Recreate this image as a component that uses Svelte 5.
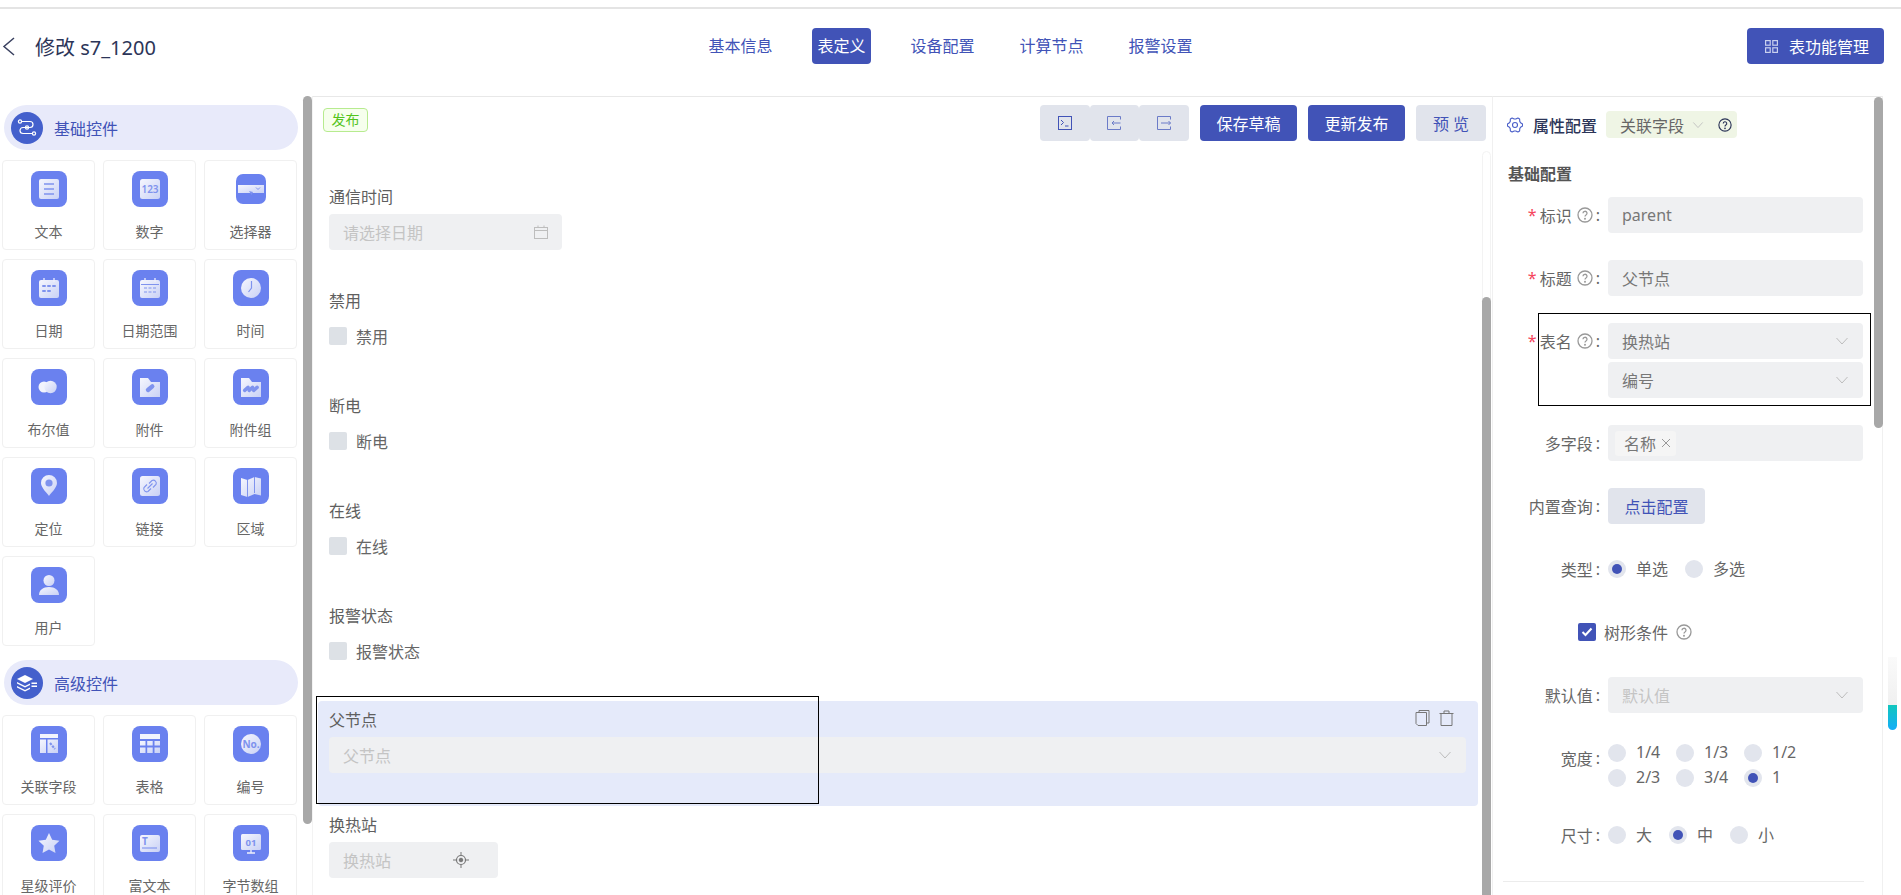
<script>
	const tabs = ['基本信息', '表定义', '设备配置', '计算节点', '报警设置'];

	const fold = '#7f93ee';
	const icons = {
		text: `<rect x="8" y="8" width="20" height="20" rx="2" fill="url(#pale)"/><path d="M13 13h10M13 18h10M13 23h10" stroke="${fold}" stroke-width="1.7"/>`,
		number: `<rect x="8" y="8" width="20" height="20" rx="2.5" fill="url(#pale)"/><text x="18" y="21.5" text-anchor="middle" font-size="10" font-weight="600" fill="${fold}" font-family="Noto Sans, sans-serif">123</text>`,
		select: `<rect x="5" y="14" width="26" height="8" fill="url(#pale)"/><path d="m23 16.500 2 2 2-2" stroke="${fold}" fill="none"/><path d="m16 20 4 1-1.500 3z" fill="${fold}"/>`,
		date: `<rect x="8" y="10" width="20" height="18" rx="2" fill="url(#pale)"/><path d="M13 8v4M23 8v4" stroke="#eef0fc" stroke-width="1.3"/><path d="M12 16h2M17 16h2M22 16h2M12 21h2M17 21h2" stroke="${fold}" stroke-width="2" stroke-linecap="round"/>`,
		range: `<rect x="8" y="10" width="20" height="18" rx="2" fill="url(#pale)"/><path d="M13 8v4M23 8v4" stroke="#eef0fc" stroke-width="1.3"/><path d="M9 14.5h18" stroke="${fold}"/><path d="M12 18h3M16.5 18h3M21 18h3M12 22h3M16.5 22h3M21 22h3" stroke="${fold}" stroke-width="1.2"/>`,
		clock: `<circle cx="18" cy="18" r="10" fill="url(#pale)"/><path d="M18.5 11v7l-3 4" stroke="${fold}" stroke-width="1.2" fill="none"/>`,
		toggle: `<circle cx="13" cy="18" r="5.5" fill="#f2f4fd"/><circle cx="19.5" cy="18" r="6.2" fill="url(#pale)"/>`,
		file: `<path d="M8 9h8l3 4h9v15H8z" fill="url(#pale)"/><rect x="13" y="17" width="10" height="4.4" rx="2.2" transform="rotate(-40 18 19)" fill="${fold}"/>`,
		files: `<path d="M8 9h8l3 4h9v15H8z" fill="url(#pale)"/><g fill="${fold}"><rect x="9.5" y="18" width="8" height="3.6" rx="1.8" transform="rotate(-40 13.5 20)"/><rect x="14" y="18" width="8" height="3.6" rx="1.8" transform="rotate(-40 18 20)"/><rect x="18.5" y="18" width="8" height="3.6" rx="1.8" transform="rotate(-40 22.5 20)"/></g>`,
		pin: `<path d="M18 28c-1-2-8-8-8-13a8 8 0 0 1 16 0c0 5-7 11-8 13z" fill="url(#pale)"/><circle cx="18" cy="15" r="3.6" fill="${fold}"/>`,
		link: `<rect x="8" y="8" width="20" height="20" rx="2.5" fill="url(#pale)"/><path d="M17 15.5l3-3a3 3 0 0 1 4 4l-3 3M19 20.500l-3 3a3 3 0 0 1-4-4l3-3M15.500 20.500l5-5" stroke="${fold}" stroke-width="1.1" fill="none"/>`,
		map: `<path d="M8 10l6.500 2 7-3 6.500 1.500v17l-6.500-1.500-7 3-6.500-2z" fill="url(#pale)"/><path d="M14.500 12v17M21.500 9v16" stroke="${fold}" stroke-width="1"/>`,
		user: `<circle cx="18" cy="13.500" r="5.500" fill="url(#pale)"/><path d="M8 28c0-5 4-8 10-8s10 3 10 8z" fill="url(#pale)"/>`,
		relate: `<path d="M9 8h18v4H9z" fill="#f2f4fd"/><path d="M9 13.500h6V27H9zM16.500 13.500H27V27H16.500z" fill="url(#pale)"/><path d="m19 17 5 6" stroke="${fold}" stroke-width="2.200" stroke-dasharray="2.500 1"/>`,
		table: `<path d="M8 8h20v5H8z" fill="#f2f4fd"/><path d="M8 15h5.500v4.500H8zM15.200 15h5.500v4.500h-5.500zM22.500 15H28v4.500h-5.500zM8 21.500h5.500V27H8zM15.200 21.500h5.500V27h-5.500zM22.500 21.500H28V27h-5.500z" fill="url(#pale)"/>`,
		no: `<circle cx="18" cy="18" r="10" fill="url(#pale)"/><text x="18" y="21.500" text-anchor="middle" font-size="10" font-weight="700" fill="${fold}" font-family="Noto Sans, sans-serif">No.</text>`,
		star: `<path d="m18 8 3.200 6.700 7.300 1-5.300 5.100 1.300 7.200-6.500-3.500-6.500 3.500 1.300-7.200-5.300-5.100 7.300-1z" fill="url(#pale)" stroke-linejoin="round"/>`,
		rich: `<rect x="8" y="10" width="20" height="17" rx="2" fill="url(#pale)"/><text x="13" y="20" text-anchor="middle" font-size="10" font-weight="700" fill="${fold}" font-family="Noto Sans, sans-serif">T</text><path d="M10 23h15" stroke="${fold}" stroke-width="1.100"/>`,
		byte: `<rect x="8" y="9" width="20" height="16" rx="1.500" fill="url(#pale)"/><path d="M18 25v3M14 28h8" stroke="#eef0fc" stroke-width="1.300"/><text x="18" y="21" text-anchor="middle" font-size="9.500" font-weight="700" fill="${fold}" font-family="Noto Sans, sans-serif">01</text>`
	};

	const basicItems = [
		['文本', 'text'], ['数字', 'number'], ['选择器', 'select'],
		['日期', 'date'], ['日期范围', 'range'], ['时间', 'clock'],
		['布尔值', 'toggle'], ['附件', 'file'], ['附件组', 'files'],
		['定位', 'pin'], ['链接', 'link'], ['区域', 'map'],
		['用户', 'user']
	];
	const advancedItems = [
		['关联字段', 'relate'], ['表格', 'table'], ['编号', 'no'],
		['星级评价', 'star'], ['富文本', 'rich'], ['字节数组', 'byte']
	];

	const checkFields = ['禁用', '断电', '在线', '报警状态'];
	const widths = [['1/4'], ['1/3'], ['1/2'], ['2/3'], ['3/4'], ['1', true]];
	const sizes = [['大'], ['中', true], ['小']];

	// six-toothed cog for the panel heading
	const gearPoints = Array.from({ length: 24 }, (_, i) => {
		const angle = ((i - 0.5) * Math.PI) / 12;
		const r = [7.6, 7.6, 6, 6][i % 4];
		return `${(8 + r * Math.cos(angle)).toFixed(2)},${(8 + r * Math.sin(angle)).toFixed(2)}`;
	}).join(' ');
</script>

{#snippet help(size = 16, color = '#999')}
	<svg class="help" width={size} height={size} viewBox="0 0 16 16" fill="none" stroke={color} stroke-width="1.300">
		<circle cx="8" cy="8" r="7" />
		<path d="M6 6.300a2 2 0 1 1 3 1.700c-.7.400-1 .8-1 1.600" />
		<circle cx="8" cy="11.800" r=".4" />
	</svg>
{/snippet}

{#snippet chevron(size = 14)}
	<svg class="chevron" width={size} height={size} viewBox="0 0 14 14" fill="none" stroke="#bdbdbd" stroke-width="1">
		<path d="m1.500 4 5.500 6 5.500-6" />
	</svg>
{/snippet}

{#snippet radio(on = false)}
	<span class="radio" class:on></span>
{/snippet}

{#snippet card(item)}
	<div class="card">
		<svg class="tile" width="36" height="36" viewBox="0 0 36 36">
			{#if item[1] === 'select'}
				<rect x="3" y="3" width="30" height="30" rx="7" fill="#6a81ef" />
			{:else}
				<rect width="36" height="36" rx="8" fill="#6a81ef" />
			{/if}
			{@html icons[item[1]]}
		</svg>
		<span>{item[0]}</span>
	</div>
{/snippet}

<svg class="defs" width="0" height="0">
	<defs>
		<linearGradient id="pale" x1="0" y1="0" x2="1" y2="1">
			<stop offset="0" stop-color="#f6f7fe" />
			<stop offset="1" stop-color="#c9d1f5" />
		</linearGradient>
	</defs>
</svg>

<div class="page">
	<header class="top">
		<div class="title">
			<svg width="13" height="19" viewBox="0 0 13 19" fill="none" stroke="#3a4160" stroke-width="1.500">
				<path d="M12 1 2 9.500 12 18" />
			</svg>
			<h1>修改 s7_1200</h1>
		</div>
		<nav class="tabs">
			{#each tabs as tab, i}
				<span class="tab" class:active={i === 1}>{tab}</span>
			{/each}
		</nav>
		<button class="primary manage">
			<svg width="13" height="13" viewBox="0 0 13 13" fill="none" stroke="#c9d0ee" stroke-width="1.200">
				<rect x=".6" y=".6" width="4.600" height="4.600" />
				<rect x="7.800" y=".6" width="4.600" height="4.600" />
				<rect x=".6" y="7.800" width="4.600" height="4.600" />
				<rect x="7.800" y="7.800" width="4.600" height="4.600" />
			</svg>
			表功能管理
		</button>
	</header>

	<main class="body">
		<aside class="palette">
			<div class="pill">
				<span class="pill-icon">
					<svg width="20" height="18" viewBox="0 0 20 18" fill="none" stroke="#fff" stroke-width="1.200">
						<path d="M5 2.500h8a3 3 0 0 1 0 6H6a3 3 0 0 0 0 6h9" />
						<circle cx="3" cy="2.500" r="1.600" />
						<circle cx="10" cy="8.500" r="1.600" />
						<circle cx="17" cy="14.500" r="1.600" />
					</svg>
				</span>
				基础控件
			</div>
			<div class="grid">
				{#each basicItems as item}
					{@render card(item)}
				{/each}
			</div>
			<div class="pill second">
				<span class="pill-icon">
					<svg width="20" height="18" viewBox="0 0 20 18" fill="#fff">
						<path d="m8 1 8 4-8 4-8-4z" />
						<path d="m0 8 8 4 5-2.500V11l-5 2.500L0 9.500zM0 12l8 4 5-2.500V15l-5 2.500L0 13.500z" />
						<path d="M14.500 8.500H20v1.500h-5.500zM14.500 11.500H20V13h-5.500z" />
					</svg>
				</span>
				高级控件
			</div>
			<div class="grid">
				{#each advancedItems as item}
					{@render card(item)}
				{/each}
			</div>
			<div class="thumb palette-thumb"></div>
		</aside>

		<section class="canvas">
			<div class="toolbar">
				<span class="status">发布</span>
				<div class="actions">
					<div class="icon-group">
						<button class="ghost" aria-label="脚本">
							<svg width="14" height="14" viewBox="0 0 14 14" fill="none" stroke="#4153b7">
								<rect x=".5" y=".5" width="13" height="13" />
								<path d="m3 4 2.500 2.500L3 9M7 10h3.500" />
							</svg>
						</button>
						<button class="ghost" aria-label="导入">
							<svg width="14" height="14" viewBox="0 0 14 14" fill="none" stroke="#6b7bc8">
								<path d="M13.500 3.500V.5H.5v13h13v-3" />
								<path d="M13.500 7H5M7 5 5 7l2 2" />
							</svg>
						</button>
						<button class="ghost" aria-label="导出">
							<svg width="14" height="14" viewBox="0 0 14 14" fill="none" stroke="#6b7bc8">
								<path d="M13.500 3.500V.5H.5v13h13v-3" />
								<path d="M4 7h9.500M11.500 5l2 2-2 2" />
							</svg>
						</button>
					</div>
					<button class="primary wide">保存草稿</button>
					<button class="primary wide">更新发布</button>
					<button class="ghost preview">预 览</button>
				</div>
			</div>

			<div class="field">
				<div class="field-label">通信时间</div>
				<div class="input muted date-input">
					请选择日期
					<svg width="14" height="14" viewBox="0 0 14 14" fill="none" stroke="#bdbdbd">
						<rect x=".5" y="2.500" width="13" height="11" />
						<path d="M.5 5.500h13M4 .5v2M10 .5v2" />
					</svg>
				</div>
			</div>

			{#each checkFields as name}
				<div class="field">
					<div class="field-label">{name}</div>
					<label class="check-row"><span class="box"></span>{name}</label>
				</div>
			{/each}

			<div class="field selected">
				<div class="field-label">父节点</div>
				<div class="input muted">
					父节点
					{@render chevron()}
				</div>
				<div class="field-tools">
					<svg width="15" height="16" viewBox="0 0 15 16" fill="none" stroke="#777">
						<path d="M4 2V.5h10V13h-2" />
						<path d="M1 2.500h10.500v13H3l-2-2z" />
					</svg>
					<svg width="15" height="16" viewBox="0 0 15 16" fill="none" stroke="#777">
						<path d="M.5 3.500h14M5 3.500V1h5v2.500M2 3.500v12h11v-12" />
					</svg>
				</div>
			</div>

			<div class="field">
				<div class="field-label">换热站</div>
				<div class="input muted locate-input">
					换热站
					<svg width="16" height="16" viewBox="0 0 16 16" fill="none" stroke="#777">
						<circle cx="8" cy="8" r="4.500" stroke-width="1.200" />
						<circle cx="8" cy="8" r="1.800" fill="#777" />
						<path d="M8 0v3.500M8 12.500V16M0 8h3.500M12.500 8H16" />
					</svg>
				</div>
			</div>
			<div class="track canvas-track"></div>
			<div class="thumb canvas-thumb"></div>
		</section>

		<aside class="props">
			<div class="props-head">
				<svg width="16" height="16" viewBox="0 0 16 16" fill="none" stroke="#4a5fc9" stroke-width="1.100">
					<polygon points={gearPoints} stroke-linejoin="round" />
					<circle cx="8" cy="8" r="2.500" />
				</svg>
				<strong>属性配置</strong>
				<span class="chip">
					关联字段
					{@render chevron(12)}
					<span class="chip-help">{@render help(14, '#2c3558')}</span>
				</span>
			</div>

			<h2>基础配置</h2>

			<div class="form">
				<div class="label"><i>*</i>标识{@render help()}<b>:</b></div>
				<div class="input">parent</div>

				<div class="label"><i>*</i>标题{@render help()}<b>:</b></div>
				<div class="input">父节点</div>

				<div class="label"><i>*</i>表名{@render help()}<b>:</b></div>
				<div class="stack">
					<div class="input">换热站{@render chevron()}</div>
					<div class="input">编号{@render chevron()}</div>
				</div>

				<div class="label">多字段<b>:</b></div>
				<div class="input tags">
					<span class="tag">
						名称
						<svg width="10" height="10" viewBox="0 0 10 10" stroke="#999">
							<path d="m1 1 8 8M9 1 1 9" />
						</svg>
					</span>
				</div>

				<div class="label">内置查询<b>:</b></div>
				<div><button class="ghost configure">点击配置</button></div>

				<div class="label">类型<b>:</b></div>
				<div class="radios">
					<span class="opt">{@render radio(true)}单选</span>
					<span class="opt">{@render radio()}多选</span>
				</div>

				<div class="tree-row">
					<span class="box checked">
						<svg width="12" height="10" viewBox="0 0 12 10" fill="none" stroke="#fff" stroke-width="2">
							<path d="m1.500 5 3 3 6-6.500" />
						</svg>
					</span>
					树形条件
					{@render help()}
				</div>

				<div class="label">默认值<b>:</b></div>
				<div class="input muted">默认值{@render chevron()}</div>

				<div class="label">宽度<b>:</b></div>
				<div class="width-grid">
					{#each widths as [text, on]}
						<span class="opt">{@render radio(on)}{text}</span>
					{/each}
				</div>

				<div class="label">尺寸<b>:</b></div>
				<div class="radios">
					{#each sizes as [text, on]}
						<span class="opt">{@render radio(on)}{text}</span>
					{/each}
				</div>
			</div>
			<hr />
			<div class="thumb props-thumb"></div>
		</aside>

		<div class="mini-scroll"></div>
	</main>

	<div class="mark mark-field"></div>
	<div class="mark mark-table"></div>
</div>

<style>
	:global(body) {
		overflow: hidden;
		background: #fff;
	}

	.defs {
		position: absolute;
	}

	.page {
		position: relative;
		height: 895px;
		overflow: hidden;
		font-family: 'Noto Sans', 'Noto Sans CJK SC', sans-serif;
		font-size: 16px;
		color: #666;
		background: #fff;
	}

	button {
		font: inherit;
		border: none;
		border-radius: 4px;
		padding: 0;
		cursor: pointer;
	}

	.primary {
		background: #4153b7;
		color: #fff;
		height: 36px;
	}

	.ghost {
		background: #e1e4ec;
		color: #4153b7;
		height: 36px;
	}

	/* header */
	.top {
		display: grid;
		grid-template-columns: 703px auto 1fr;
		align-items: start;
		height: 89px;
		margin-top: 7px;
		padding-top: 19px;
		box-sizing: border-box;
		border-top: 2px solid #e4e4e4;
	}

	.title {
		display: flex;
		align-items: center;
		height: 36px;
		padding-left: 2px;
	}

	h1 {
		margin: 0 0 0 20px;
		font-size: 20px;
		font-weight: 400;
		color: #2c3558;
	}

	.tabs {
		display: flex;
		gap: 34px;
	}

	.tab {
		padding: 0 5.5px;
		line-height: 36px;
		color: #4153b7;
		border-radius: 4px;
	}

	.tab.active {
		background: #4153b7;
		color: #fff;
	}

	.manage {
		justify-self: end;
		display: flex;
		align-items: center;
		gap: 11px;
		width: 137px;
		margin-right: 17px;
		padding-left: 18px;
	}

	/* main area */
	.body {
		display: flex;
		height: 799px;
		overflow: hidden;
		position: relative;
	}

	.palette {
		position: relative;
		flex: 0 0 312px;
		box-sizing: border-box;
		padding-top: 9px;
		padding-left: 2px;
	}

	.pill {
		display: flex;
		align-items: center;
		gap: 11px;
		width: 294px;
		height: 45px;
		margin: 0 0 10px 2px;
		padding-left: 7px;
		box-sizing: border-box;
		border-radius: 23px;
		background: #e8eafa;
		color: #4153b7;
	}

	.pill.second {
		margin-top: 14px;
	}

	.pill-icon {
		display: flex;
		align-items: center;
		justify-content: center;
		width: 32px;
		height: 32px;
		border-radius: 50%;
		background: #4460cc;
	}

	.grid {
		display: grid;
		grid-template-columns: repeat(3, 93px);
		grid-auto-rows: 90px;
		gap: 9px 8px;
	}

	.card {
		display: flex;
		flex-direction: column;
		align-items: center;
		box-sizing: border-box;
		padding-top: 10px;
		border: 1px solid #f0f0f0;
		border-radius: 4px;
		font-size: 14px;
		line-height: 20px;
	}

	.tile {
		margin-bottom: 15px;
		flex: none;
	}

	.thumb {
		position: absolute;
		width: 9px;
		background: #a8a8a8;
		border-radius: 5px;
	}

	.palette-thumb {
		left: 303px;
		top: 0;
		height: 728px;
	}

	/* form canvas */
	.canvas {
		position: relative;
		flex: 0 0 1180px;
		box-sizing: border-box;
		border-top: 1px solid #e8e8e8;
		border-left: 1px solid #f3f3f3;
	}

	.toolbar {
		display: flex;
		justify-content: space-between;
		align-items: flex-start;
		height: 80.5px;
		box-sizing: border-box;
		padding: 8px 6px 0 10px;
	}

	.status {
		margin-top: 3px;
		width: 45px;
		height: 24px;
		box-sizing: border-box;
		border: 1px solid #b7eb8f;
		border-radius: 4px;
		background: #f6ffed;
		color: #52c41a;
		font-size: 14px;
		line-height: 22px;
		text-align: center;
	}

	.actions {
		display: flex;
		gap: 11px;
	}

	.icon-group {
		display: flex;
	}

	.icon-group .ghost {
		display: flex;
		align-items: center;
		justify-content: center;
		width: 49.7px;
	}

	.wide {
		width: 97px;
	}

	.preview {
		width: 70px;
	}

	.field {
		position: relative;
		height: 104.8px;
		box-sizing: border-box;
		padding: 8px 12px 0 16px;
	}

	.field.selected {
		margin: 0 14px 0 5px;
		padding-left: 11px;
		background: #e5eafa;
		border-radius: 4px;
	}

	.field-label {
		line-height: 22px;
		margin-bottom: 6px;
		color: #5f5f5f;
	}

	.input {
		display: flex;
		align-items: center;
		justify-content: space-between;
		height: 36px;
		box-sizing: border-box;
		padding: 0 14px;
		border-radius: 4px;
		background: #eff0f2;
		color: #777;
	}

	.input.muted {
		color: #c4c4c4;
	}

	.date-input {
		width: 233px;
	}

	.locate-input {
		width: 169px;
		padding-right: 29px;
	}

	.check-row {
		display: flex;
		align-items: center;
		gap: 9px;
		height: 36px;
	}

	.box {
		display: inline-flex;
		align-items: center;
		justify-content: center;
		flex: none;
		width: 18px;
		height: 18px;
		border-radius: 2px;
		background: #dde1e6;
	}

	.box.checked {
		background: #4153b7;
	}

	.field-tools {
		position: absolute;
		top: 9px;
		right: 24px;
		display: flex;
		gap: 9px;
	}

	.track {
		position: absolute;
		width: 9px;
		box-sizing: border-box;
		border: 1px solid #f3f3f3;
		border-radius: 5px;
	}

	.canvas-track {
		left: 1169px;
		top: 54px;
		bottom: 0;
	}

	.canvas-thumb {
		left: 1169px;
		top: 200px;
		bottom: -10px;
	}

	/* properties panel */
	.props {
		position: relative;
		flex: 0 0 391px;
		box-sizing: border-box;
		padding-top: 14px;
		border-top: 1px solid #e8e8e8;
		border-left: 1px solid #f0f0f0;
		border-right: 1px solid #f0f0f0;
	}

	.props-head {
		display: flex;
		align-items: center;
		height: 27px;
		padding-left: 14px;
		white-space: nowrap;
	}

	.props-head strong {
		margin-left: 10px;
		font-weight: 500;
		color: #2c3558;
	}

	.chip {
		display: flex;
		align-items: center;
		height: 27px;
		margin-left: 9px;
		padding-left: 14px;
		width: 131px;
		box-sizing: border-box;
		border-radius: 4px;
		background: #eff5e5;
		color: #666;
	}

	.chip .chevron {
		margin-left: 8px;
	}

	.chip-help {
		display: flex;
		margin-left: 9px;
	}

	h2 {
		margin: 24px 0 11px 15px;
		font-size: 16px;
		line-height: 24px;
		font-weight: 700;
		color: #555;
	}

	.form {
		display: grid;
		grid-template-columns: 107px 255px;
		column-gap: 8px;
		row-gap: 27px;
	}

	.label {
		display: flex;
		justify-content: flex-end;
		align-items: center;
		align-self: start;
		height: 36px;
		white-space: nowrap;
	}

	.label i {
		margin-right: 3px;
		color: #f5455c;
		font-style: normal;
		line-height: 16px;
	}

	.label b {
		font-weight: 400;
		margin-left: 3px;
	}

	.help {
		flex: none;
		margin-left: 5px;
	}

	.stack {
		display: flex;
		flex-direction: column;
		gap: 3px;
	}

	.tags {
		justify-content: flex-start;
		padding-left: 7px;
	}

	.tag {
		display: flex;
		align-items: center;
		gap: 5px;
		height: 25px;
		padding: 0 5px 0 9px;
		border-radius: 3px;
		background: #f5f5f5;
	}

	.configure {
		width: 97px;
	}

	.radios {
		display: flex;
		align-items: center;
		gap: 17px;
		height: 36px;
	}

	.opt {
		display: flex;
		align-items: center;
		gap: 10px;
		line-height: 25px;
	}

	.radio {
		position: relative;
		flex: none;
		width: 18px;
		height: 18px;
		border-radius: 50%;
		background: #e2e5ed;
	}

	.radio.on::after {
		content: '';
		position: absolute;
		inset: 4px;
		border-radius: 50%;
		background: #4153b7;
	}

	.tree-row {
		grid-column: 1 / -1;
		display: flex;
		align-items: center;
		gap: 8px;
		height: 36px;
		padding-left: 85px;
	}

	.tree-row .help {
		margin-left: 0;
	}

	.width-grid {
		display: grid;
		grid-template-columns: repeat(3, 68px);
		grid-auto-rows: 25px;
	}

	hr {
		margin: 28px 18px 0 10px;
		border: none;
		border-top: 1px solid #ececec;
	}

	.props-thumb {
		left: 381px;
		top: 0;
		height: 331px;
	}

	.mini-scroll {
		position: absolute;
		left: 1888px;
		top: 561px;
		width: 9px;
		height: 73px;
		border-radius: 0 0 5px 5px;
		background: linear-gradient(#fafafa, #f0f0f0 66%, #12c6be 66%, #14aef8);
	}

	/* annotation boxes */
	.mark {
		position: absolute;
		box-sizing: border-box;
		border: 1px solid #000;
		pointer-events: none;
	}

	.mark-field {
		left: 316px;
		top: 696px;
		width: 503px;
		height: 108px;
	}

	.mark-table {
		left: 1538px;
		top: 313px;
		width: 333px;
		height: 93px;
	}
</style>
